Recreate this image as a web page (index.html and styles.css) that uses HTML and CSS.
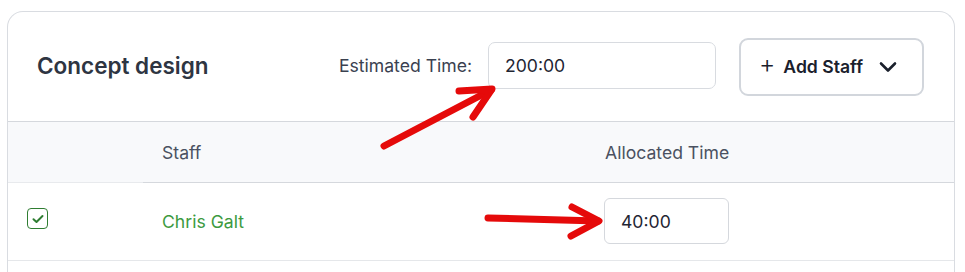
FILE: index.html
```html
<!DOCTYPE html>
<html lang="en">
<head>
<meta charset="utf-8">
<title>Concept design</title>
<link rel="stylesheet" href="styles.css">
</head>
<body>
<div class="page">
  <section class="card">
    <header class="card-head">
      <h2 class="title">Concept design</h2>
      <div class="head-right">
        <label class="est-label" for="est">Estimated Time:</label>
        <input class="est-input" id="est" type="text" value="200:00">
        <button class="add-btn" type="button">
          <span class="plus">+</span>
          <span class="add-text">Add Staff</span>
          <svg class="chev" width="18" height="12" viewBox="0 0 18 12"><path d="M2 2.5 L9 9.5 L16 2.5" fill="none" stroke="#1a202c" stroke-width="2.6" stroke-linecap="round" stroke-linejoin="round"/></svg>
        </button>
      </div>
    </header>
    <div class="table">
      <div class="trow thead">
        <div class="cell c-check"></div>
        <div class="cell c-staff">Staff</div>
        <div class="cell c-time">Allocated Time</div>
      </div>
      <div class="trow tbody">
        <div class="cell c-check">
          <span class="checkbox">
            <svg width="12" height="10" viewBox="0 0 12 10"><path d="M1.5 5.2 L4.5 8 L10.5 2" fill="none" stroke="#2f7d32" stroke-width="2" stroke-linecap="round" stroke-linejoin="round"/></svg>
          </span>
        </div>
        <div class="cell c-staff name">Chris Galt</div>
        <div class="cell c-time"><input class="time-input" type="text" value="40:00"></div>
      </div>
    </div>
  </section>
  <svg class="annot" width="965" height="272" viewBox="0 0 965 272">
    <g fill="none" stroke="#e50a0a" stroke-width="7" stroke-linecap="round" stroke-linejoin="round">
      <path d="M384 146 L491 90"/>
      <path d="M459 91 L492 89 L473 117"/>
      <path d="M488 218 L598 221"/>
      <path d="M572 207 L599 221 L571 236"/>
    </g>
  </svg>
</div>
</body>
</html>
```
FILE: styles.css
```css
* { box-sizing: border-box; }
html, body { margin: 0; padding: 0; background: #ffffff; }
body {
  font-family: Inter, "Noto Sans", "Liberation Sans", sans-serif;
  color: #2e3542;
  width: 965px;
  height: 272px;
  overflow: hidden;
}
.page { position: relative; width: 965px; height: 272px; padding: 11px 10px 0 7px; overflow: hidden; }
.card {
  border: 1px solid #d9dce1;
  border-radius: 16px 16px 0 0;
  border-bottom: none;
  height: 261px;
  overflow: hidden;
  background: #fff;
}
.card-head {
  height: 110px;
  display: flex;
  align-items: center;
  justify-content: space-between;
  padding: 0 30px 0 29px;
  border-bottom: 1px solid #d5d8dd;
}
.title {
  margin: 0;
  font-size: 22.5px;
  font-weight: 600;
  color: #2e3542;
  position: relative;
  top: -1px;
}
.head-right { display: flex; align-items: center; }
.est-label { font-size: 17.6px; color: #3a4150; margin-right: 16px; position: relative; top: -1px; }
.est-input {
  width: 228px;
  height: 47px;
  border: 1px solid #d8dbe0;
  border-radius: 7px;
  padding: 0 16px;
  font: inherit;
  font-size: 17.6px;
  color: #1f2533;
  outline: none;
  margin-right: 23px;
  position: relative;
  top: -1px;
}
.add-btn {
  width: 185px;
  height: 58px;
  border: 2px solid #d2d6dc;
  border-radius: 9px;
  background: #fff;
  display: flex;
  align-items: center;
  padding: 0 0 0 18px;
  font: inherit;
  color: #1a202c;
}
.plus { font-size: 25px; font-weight: 300; line-height: 1; margin-right: 8px; position: relative; top: -2px; }
.add-text { font-size: 17.6px; font-weight: 600; margin-right: 16px; }
.chev { display: block; }
.trow { display: grid; grid-template-columns: 135px 462px 1fr; }
.thead { height: 61px; background: #f8f9fb; }
.thead .cell { border-bottom: 1px solid #d5d8dd; color: #4a5161; }
.thead .c-check { border-bottom-color: #e8eaed; }
.tbody { height: 78px; border-bottom: 1px solid #e5e7ea; }
.cell { display: flex; align-items: center; font-size: 17.6px; }
.c-check { padding-left: 19px; }
.c-staff { padding-left: 19px; }
.c-time { padding-left: 0; }
.checkbox {
  width: 21px;
  height: 21px;
  border: 1.5px solid #2f7d32;
  border-radius: 4px;
  display: flex;
  align-items: center;
  justify-content: center;
  margin-top: -6px;
}
.name { color: #3c9a40; }
.time-input {
  width: 125px;
  height: 46px;
  border: 1px solid #d5d8dd;
  border-radius: 6px;
  padding: 0 16px;
  font: inherit;
  font-size: 17.6px;
  color: #1f2533;
  outline: none;
  margin-left: -1px;
  margin-top: -1px;
}
.annot { position: absolute; top: 0; left: 0; pointer-events: none; }
```
